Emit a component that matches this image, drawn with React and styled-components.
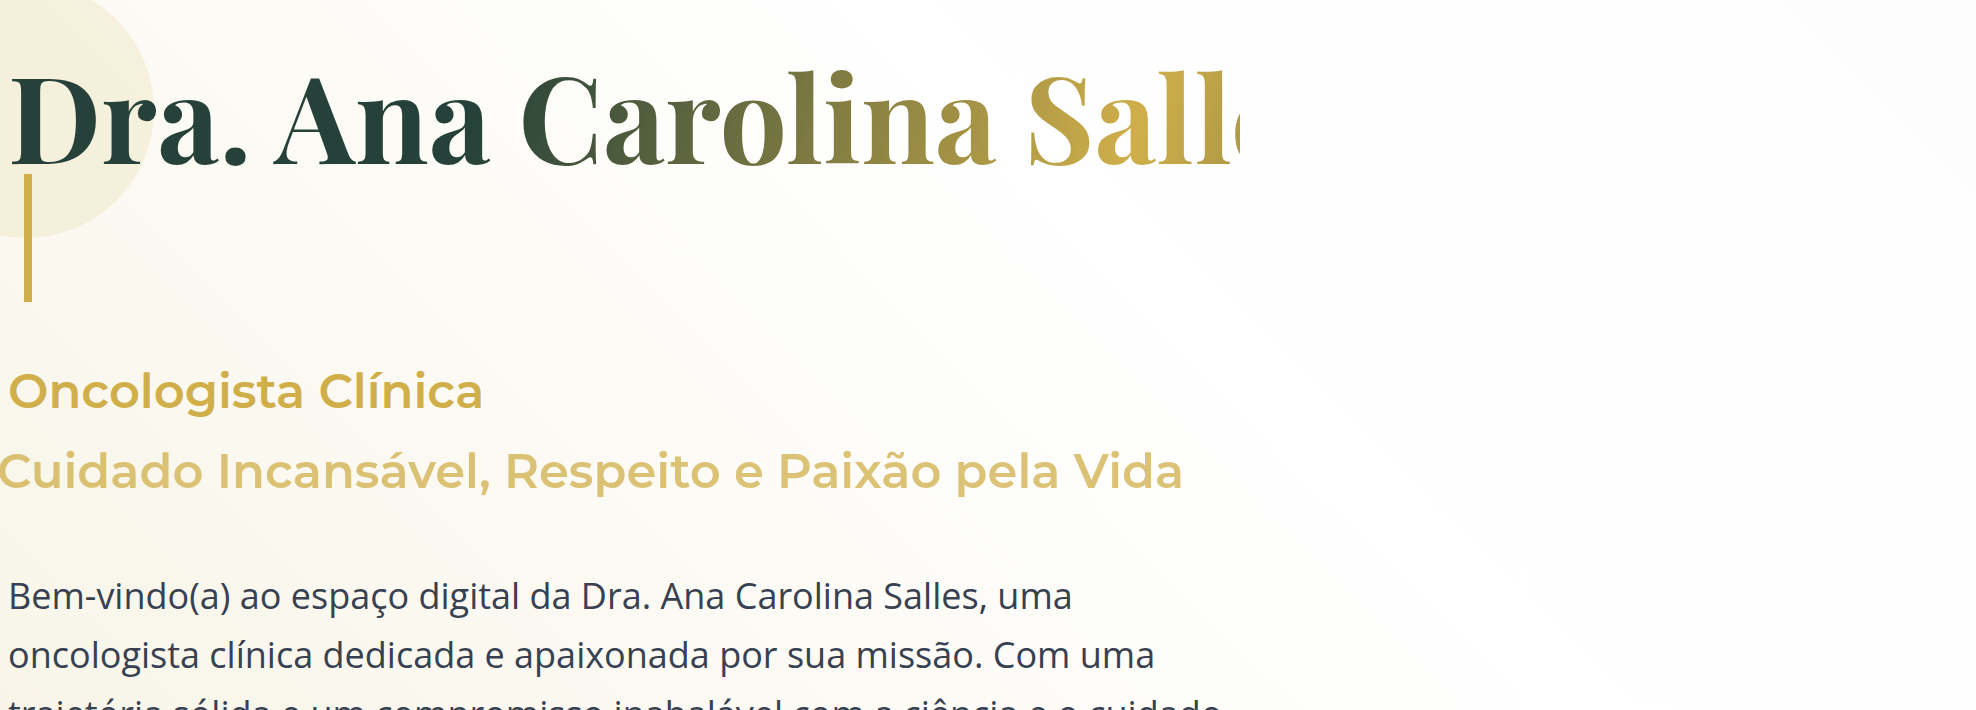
import React from "react";
import styled, { createGlobalStyle } from "styled-components";

const GlobalStyle = createGlobalStyle`
  *, *::before, *::after { box-sizing: border-box; }
  body { margin: 0; background: #ffffff; }
`;

const Hero = styled.main`
  position: relative;
  height: 100vh;
  overflow: hidden;
  background: linear-gradient(45deg, #f8f5e8 0%, #ffffff 58%, #fdfdfd 100%);
`;

const Halo = styled.div`
  position: absolute;
  top: -18px;
  left: -102px;
  width: 256px;
  height: 256px;
  border-radius: 50%;
  background: rgba(212, 190, 90, 0.14);
`;

const Content = styled.div`
  position: relative;
  display: flex;
  flex-direction: column;
  width: 100%;
  max-width: 1240px;
  padding: 54px 0 0 8px;
`;

const Name = styled.h1`
  margin: 0;
  font-family: "Playfair Display", "Liberation Serif", serif;
  font-size: 120px;
  font-weight: 700;
  line-height: 120px;
  white-space: nowrap;
  color: transparent;
  background: linear-gradient(105deg, #254139 38%, #d0af4a 91%, #254139 135%);
  -webkit-background-clip: text;
  background-clip: text;
`;

const Accent = styled.div`
  width: 8px;
  height: 128px;
  margin-left: 16px;
  background: #d0af4a;
`;

const Taglines = styled.div`
  display: flex;
  flex-direction: column;
  margin-top: 49px;
`;

const Tagline = styled.p`
  margin: 0 0 0 ${(p) => (p.$soft ? "-11px" : "0")};
  font-family: Montserrat, Inter, sans-serif;
  font-size: 48px;
  font-weight: 600;
  line-height: 80px;
  white-space: nowrap;
  color: #d0af4a;
  opacity: ${(p) => (p.$soft ? 0.75 : 1)};
`;

const Intro = styled.p`
  margin: 55px 0 0;
  font-family: "Open Sans", sans-serif;
  font-size: 36px;
  line-height: 59px;
  color: #374151;
`;

export default function App() {
  return (
    <>
      <GlobalStyle />
      <Hero>
        <Halo />
        <Content>
          <Name>Dra. Ana Carolina Salles</Name>
          <Accent />
          <Taglines>
            <Tagline>Oncologista Clínica</Tagline>
            <Tagline $soft>Cuidado Incansável, Respeito e Paixão pela Vida</Tagline>
          </Taglines>
          <Intro>
            Bem-vindo(a) ao espaço digital da Dra. Ana Carolina Salles, uma
            oncologista clínica dedicada e apaixonada por sua missão. Com uma
            trajetória sólida e um compromisso inabalável com a ciência e o cuidado
          </Intro>
        </Content>
      </Hero>
    </>
  );
}
